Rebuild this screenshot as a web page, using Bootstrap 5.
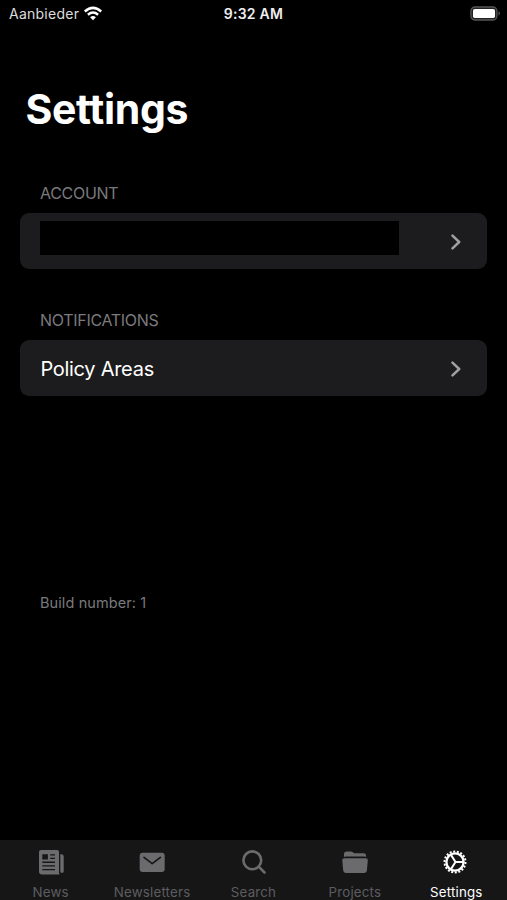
<!DOCTYPE html>
<html lang="en">
<head>
<meta charset="utf-8">
<meta name="viewport" content="width=device-width, initial-scale=1">
<title>Settings</title>
<link href="https://cdn.jsdelivr.net/npm/bootstrap@5.3.0/dist/css/bootstrap.min.css" rel="stylesheet">
<style>
body{background:#000;color:#fff;font-family:Inter,"Liberation Sans",sans-serif;}
svg{display:block;flex:none}
.screen{height:900px;width:100%}
.status{height:28px;font-size:14px;line-height:28px;padding:0 6px 0 9px}
.carrier{color:#ddd;letter-spacing:.25px}
.clock{font-size:14px;font-weight:600;color:#eee;letter-spacing:.25px;margin-right:3px}
.title{font-size:41px;line-height:50px;font-weight:700;letter-spacing:-.35px;margin:56px 0 0 25.5px}
.label{font-size:16px;line-height:20px;color:#7a7a7d;margin:49px 0 0 40px;letter-spacing:-.3px}
.label-next{margin-top:40.6px}
.cell{background:#1c1c1e;border-radius:9px;height:56px;margin:10.4px 19.6px 0 20.4px;padding:0 25.4px 0 20px;font-size:20px;letter-spacing:-.28px}
.cell svg,.cell span{margin-top:1px}
.redacted{width:358.6px;height:34px;background:#000;margin-top:-6px}
.build{font-size:14.5px;line-height:20px;color:#7a7a7d;margin:196.6px 0 0 40px;letter-spacing:.1px}
.tabs{height:60px;background:#161617}
.tab{flex:1 1 0;width:0;padding-top:8px;font-size:13.3px;line-height:18px;letter-spacing:.2px;color:#5d5d60}
.tab svg{color:#6b6b6e;margin-bottom:7px}
.tab-on,.tab-on svg{color:#fff}
.tab-on svg{margin-right:2px}
.tab span{white-space:nowrap}
</style>
<script src="https://cdn.jsdelivr.net/npm/bootstrap@5.3.0/dist/js/bootstrap.bundle.min.js"></script>
</head>
<body>
<div class="screen d-flex flex-column overflow-hidden">
  <header class="status d-flex align-items-center">
    <div class="col d-flex align-items-center"><span class="carrier">Aanbieder</span>
      <svg class="ms-1" width="20" height="16" viewBox="0 0 20 16" fill="none" stroke="#fff" stroke-width="2.5"><path d="M1.8 5.5Q10-1.8 18.2 5.5M4.9 8.7q5.1-4.3 10.2 0"/><path d="M7.1 11.2q2.9-2.2 5.8 0L10 14.2z" fill="#fff" stroke="none"/></svg>
    </div>
    <div class="clock">9:32 AM</div>
    <div class="col d-flex justify-content-end">
      <svg width="31" height="16" viewBox="0 0 31 16"><rect x=".9" y="1" width="26" height="13" rx="4" fill="#222" stroke="#555" stroke-width="1.3"/><rect x="3" y="3" width="22" height="9" rx="1.8" fill="#fff"/><path d="M28.5 5.3q3 2.2 0 4.4z" fill="#555"/></svg>
    </div>
  </header>
  <main class="flex-grow-1">
    <h1 class="title">Settings</h1>
    <div class="label">ACCOUNT</div>
    <div class="cell d-flex align-items-center justify-content-between"><div class="redacted"></div>
      <svg width="12" height="16" viewBox="0 0 12 16" fill="none" stroke="#a0a0a3" stroke-width="2.5" stroke-linecap="round" stroke-linejoin="round"><path d="m2.5 1.7 6.7 6.3-6.7 6.3"/></svg></div>
    <div class="label label-next">NOTIFICATIONS</div>
    <div class="cell d-flex align-items-center justify-content-between"><span>Policy Areas</span>
      <svg width="12" height="16" viewBox="0 0 12 16" fill="none" stroke="#a0a0a3" stroke-width="2.5" stroke-linecap="round" stroke-linejoin="round"><path d="m2.5 1.7 6.7 6.3-6.7 6.3"/></svg></div>
    <div class="build">Build number: 1</div>
  </main>
  <nav class="tabs d-flex">
    <div class="tab d-flex flex-column align-items-center">
      <svg width="28" height="28" viewBox="0 0 28 28" fill="currentColor"><path fill-rule="evenodd" d="M4 2h16a2 2 0 0 1 2 2v20.5q0 1 .7 2H5a3 3 0 0 1-3-3V4a2 2 0 0 1 2-2zM5.3 6.2v5.3h5.6V6.2zm7.9 0v1.4H18V6.2zm0 3.5v1.4H18V9.7zM5.3 13.5v1.4H18v-1.4zm0 3.7v1.4H18v-1.4zm0 3.7v1.4H18v-1.4z"/><path d="M23.3 6.2h1.2a2.2 2.2 0 0 1 2.2 2.2v14.8a1.7 1.7 0 0 1-3.4 0z"/></svg><span>News</span></div>
    <div class="tab d-flex flex-column align-items-center">
      <svg width="28" height="28" viewBox="0 0 28 28"><rect x="1.7" y="4.7" width="25" height="19.3" rx="3" fill="currentColor"/><path d="m6 9.4 8.2 6.2 8.2-6.2" fill="none" stroke="#161617" stroke-width="1.7" stroke-linecap="round" stroke-linejoin="round"/></svg><span>Newsletters</span></div>
    <div class="tab d-flex flex-column align-items-center">
      <svg width="28" height="28" viewBox="0 0 28 28" fill="none" stroke="currentColor" stroke-width="2.6" stroke-linecap="round"><circle cx="12.3" cy="12.3" r="8.9"/><path d="m18.7 18.7 5.8 5.8"/></svg><span>Search</span></div>
    <div class="tab d-flex flex-column align-items-center">
      <svg width="28" height="28" viewBox="0 0 28 28" fill="currentColor"><path d="M3 8.9V6.3a2.7 2.7 0 0 1 2.7-2.7h4.2q.9 0 1.6.5l1.2.8q.6.4 1.4.4h8.3A2.7 2.7 0 0 1 25.1 8v.9q-.6-.3-1.3-.3H4.3q-.7 0-1.3.3z"/><path d="M3.3 10.2h21.500a2 2 0 0 1 2 2.200l-.9 10.200a2.600 2.600 0 0 1-2.600 2.400H4.800a2.600 2.600 0 0 1-2.600-2.400l-.9-10.200a2 2 0 0 1 2-2.200z"/></svg><span>Projects</span></div>
    <div class="tab tab-on d-flex flex-column align-items-center">
      <svg width="28" height="28" viewBox="0 0 28 28" fill="none" stroke="currentColor"><circle cx="14" cy="14" r="10.5" stroke-width="2" pathLength="180" stroke-dasharray="5.5 4.5"/><circle cx="14" cy="14" r="8.6" stroke-width="2.3"/><path d="M14.5 14H22.5M14.5 14 9.8 6.600M14.500 14 9.800 21.400" stroke-width="2"/></svg><span>Settings</span></div>
  </nav>
</div>
</body>
</html>
